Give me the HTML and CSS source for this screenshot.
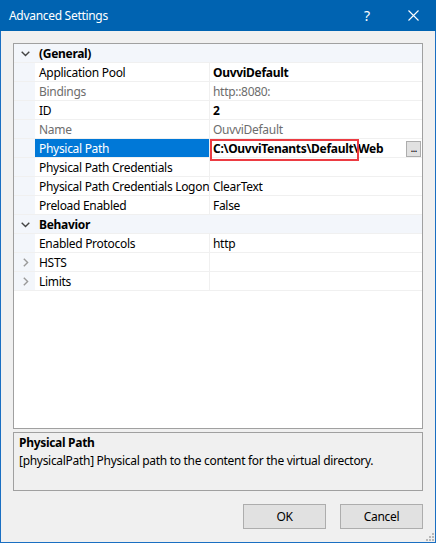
FILE: index.html
```html
<!DOCTYPE html>
<html>
<head>
<meta charset="utf-8">
<link rel="stylesheet" href="styles.css">
</head>
<body>
<div class="window">
  <div class="titlebar">
    <span class="title">Advanced Settings</span>
    <span class="help">?</span>
    <span class="close"><svg width="11" height="11" viewBox="0 0 11 11"><path d="M0.5 0.5 L10.5 10.5 M10.5 0.5 L0.5 10.5" stroke="#fff" stroke-width="1.1" fill="none"/></svg></span>
  </div>
  <div class="content">
    <div class="grid">
      <div class="row cat">
        <span class="gutter"><svg class="chev" width="9" height="6" viewBox="0 0 9 6"><path d="M0.7 0.8 L4.5 4.6 L8.3 0.8" stroke="#444" stroke-width="1.4" fill="none"/></svg></span>
        <span class="catname">(General)</span>
      </div>
      <div class="row"><span class="gutter"></span><span class="name">Application Pool</span><span class="value bold">OuvviDefault</span></div>
      <div class="row"><span class="gutter"></span><span class="name ro">Bindings</span><span class="value ro">http::8080:</span></div>
      <div class="row"><span class="gutter"></span><span class="name">ID</span><span class="value bold">2</span></div>
      <div class="row"><span class="gutter"></span><span class="name ro">Name</span><span class="value ro">OuvviDefault</span></div>
      <div class="row"><span class="gutter"></span><span class="name sel">Physical Path</span><span class="value bold pathcell">C:\OuvviTenants\Default\Web<span class="dots">...</span><span class="mark"></span></span></div>
      <div class="row"><span class="gutter"></span><span class="name">Physical Path Credentials</span><span class="value"></span></div>
      <div class="row"><span class="gutter"></span><span class="name">Physical Path Credentials Logon</span><span class="value">ClearText</span></div>
      <div class="row"><span class="gutter"></span><span class="name">Preload Enabled</span><span class="value">False</span></div>
      <div class="row cat">
        <span class="gutter"><svg class="chev" width="9" height="6" viewBox="0 0 9 6"><path d="M0.7 0.8 L4.5 4.6 L8.3 0.8" stroke="#444" stroke-width="1.4" fill="none"/></svg></span>
        <span class="catname">Behavior</span>
      </div>
      <div class="row"><span class="gutter"></span><span class="name">Enabled Protocols</span><span class="value">http</span></div>
      <div class="row"><span class="gutter"><svg class="chevr" width="6" height="9" viewBox="0 0 6 9"><path d="M0.8 0.7 L4.6 4.5 L0.8 8.3" stroke="#9a9a9a" stroke-width="1.4" fill="none"/></svg></span><span class="name">HSTS</span><span class="value"></span></div>
      <div class="row"><span class="gutter"><svg class="chevr" width="6" height="9" viewBox="0 0 6 9"><path d="M0.8 0.7 L4.6 4.5 L0.8 8.3" stroke="#9a9a9a" stroke-width="1.4" fill="none"/></svg></span><span class="name">Limits</span><span class="value"></span></div>
    </div>
    <div class="desc">
      <div class="desc-title">Physical Path</div>
      <div class="desc-text">[physicalPath] Physical path to the content for the virtual directory.</div>
    </div>
    <div class="buttons">
      <button class="btn">OK</button>
      <button class="btn">Cancel</button>
    </div>
  </div>
  <svg class="grip" width="9" height="9" viewBox="0 0 9 9">
    <rect x="7" y="1" width="2" height="2" fill="#b8b8b8"/>
    <rect x="4" y="4" width="2" height="2" fill="#b8b8b8"/>
    <rect x="7" y="4" width="2" height="2" fill="#b8b8b8"/>
    <rect x="1" y="7" width="2" height="2" fill="#b8b8b8"/>
    <rect x="4" y="7" width="2" height="2" fill="#b8b8b8"/>
    <rect x="7" y="7" width="2" height="2" fill="#b8b8b8"/>
  </svg>
</div>
</body>
</html>
```
FILE: styles.css
```css
* { box-sizing: border-box; }
html, body { margin: 0; padding: 0; }
body {
  font-family: "Noto Sans", "DejaVu Sans", sans-serif;
  font-size: 12px;
  letter-spacing: -0.3px;
  color: #000;
  background: #fff;
}
.window {
  position: relative;
  width: 436px;
  height: 543px;
  background: #f0f0f0;
  border: 1px solid #1a6fc2;
  border-top: none;
  display: flex;
  flex-direction: column;
}
.titlebar {
  height: 31px;
  margin: 0 -1px;
  background: #0063b1;
  color: #fff;
  display: flex;
  align-items: center;
  padding-left: 9px;
}
.title { flex: 1; font-size: 12px; }
.help { font-size: 14px; width: 46px; text-align: center; }
.close { width: 46px; display: flex; justify-content: center; align-items: center; }
.close svg { display: block; }
.content {
  flex: 1;
  padding: 12px 12px 0 12px;
  display: flex;
  flex-direction: column;
}
.grid {
  height: 386px;
  border: 1px solid #a0a0a0;
  background: #fff;
}
.row {
  display: grid;
  grid-template-columns: 21px 174px 213px;
  height: 19px;
  border-bottom: 1px solid #f0f0f0;
}
.gutter {
  background: #f3f6fb;
  display: flex;
  align-items: center;
  justify-content: center;
}
.chev { display: block; margin-left: 1px; margin-top: 1px; }
.chevr { display: block; margin-left: 2px; margin-top: 1px; }
.name {
  padding-left: 4px;
  padding-top: 2px;
  line-height: 16px;
  white-space: nowrap;
  overflow: hidden;
}
.value {
  border-left: 1px solid #f0f0f0;
  padding-left: 3px;
  padding-top: 2px;
  line-height: 16px;
  white-space: nowrap;
}
.ro { color: #6d6d6d; }
.bold { font-weight: bold; }
.sel { background: #0078d7; color: #fff; }
.cat { background: #f3f6fb; }
.catname {
  grid-column: 2 / 4;
  padding-left: 4px;
  padding-top: 2px;
  line-height: 16px;
  font-weight: bold;
}
.pathcell {
  position: relative;
  display: flex;
  align-items: flex-start;
}
.dots {
  margin-left: auto;
  margin-top: 0;
  margin-right: 1px;
  width: 15px;
  height: 16px;
  background: #e1e1e1;
  border: 1px solid #adadad;
  font-weight: normal;
  font-size: 11px;
  line-height: 12px;
  text-align: center;
  letter-spacing: -1px;
}
.mark {
  position: absolute;
  left: 0;
  top: 0;
  width: 149px;
  height: 22px;
  border: 2px solid #ec3b42;
}
.desc {
  margin-top: 3px;
  height: 59px;
  border: 1px solid #a0a0a0;
  background: #f0f0f0;
  padding: 1px 5px 0 5px;
  line-height: 18px;
}
.desc-title { font-weight: bold; }
.buttons {
  margin-top: 13px;
  display: flex;
  justify-content: flex-end;
  gap: 14px;
}
.btn {
  width: 83px;
  height: 25px;
  background: #e1e1e1;
  border: 1px solid #adadad;
  font-family: inherit;
  font-size: 12px;
  letter-spacing: inherit;
  color: #000;
  padding: 0;
}
.grip {
  position: absolute;
  right: 1px;
  bottom: 1px;
}
```
